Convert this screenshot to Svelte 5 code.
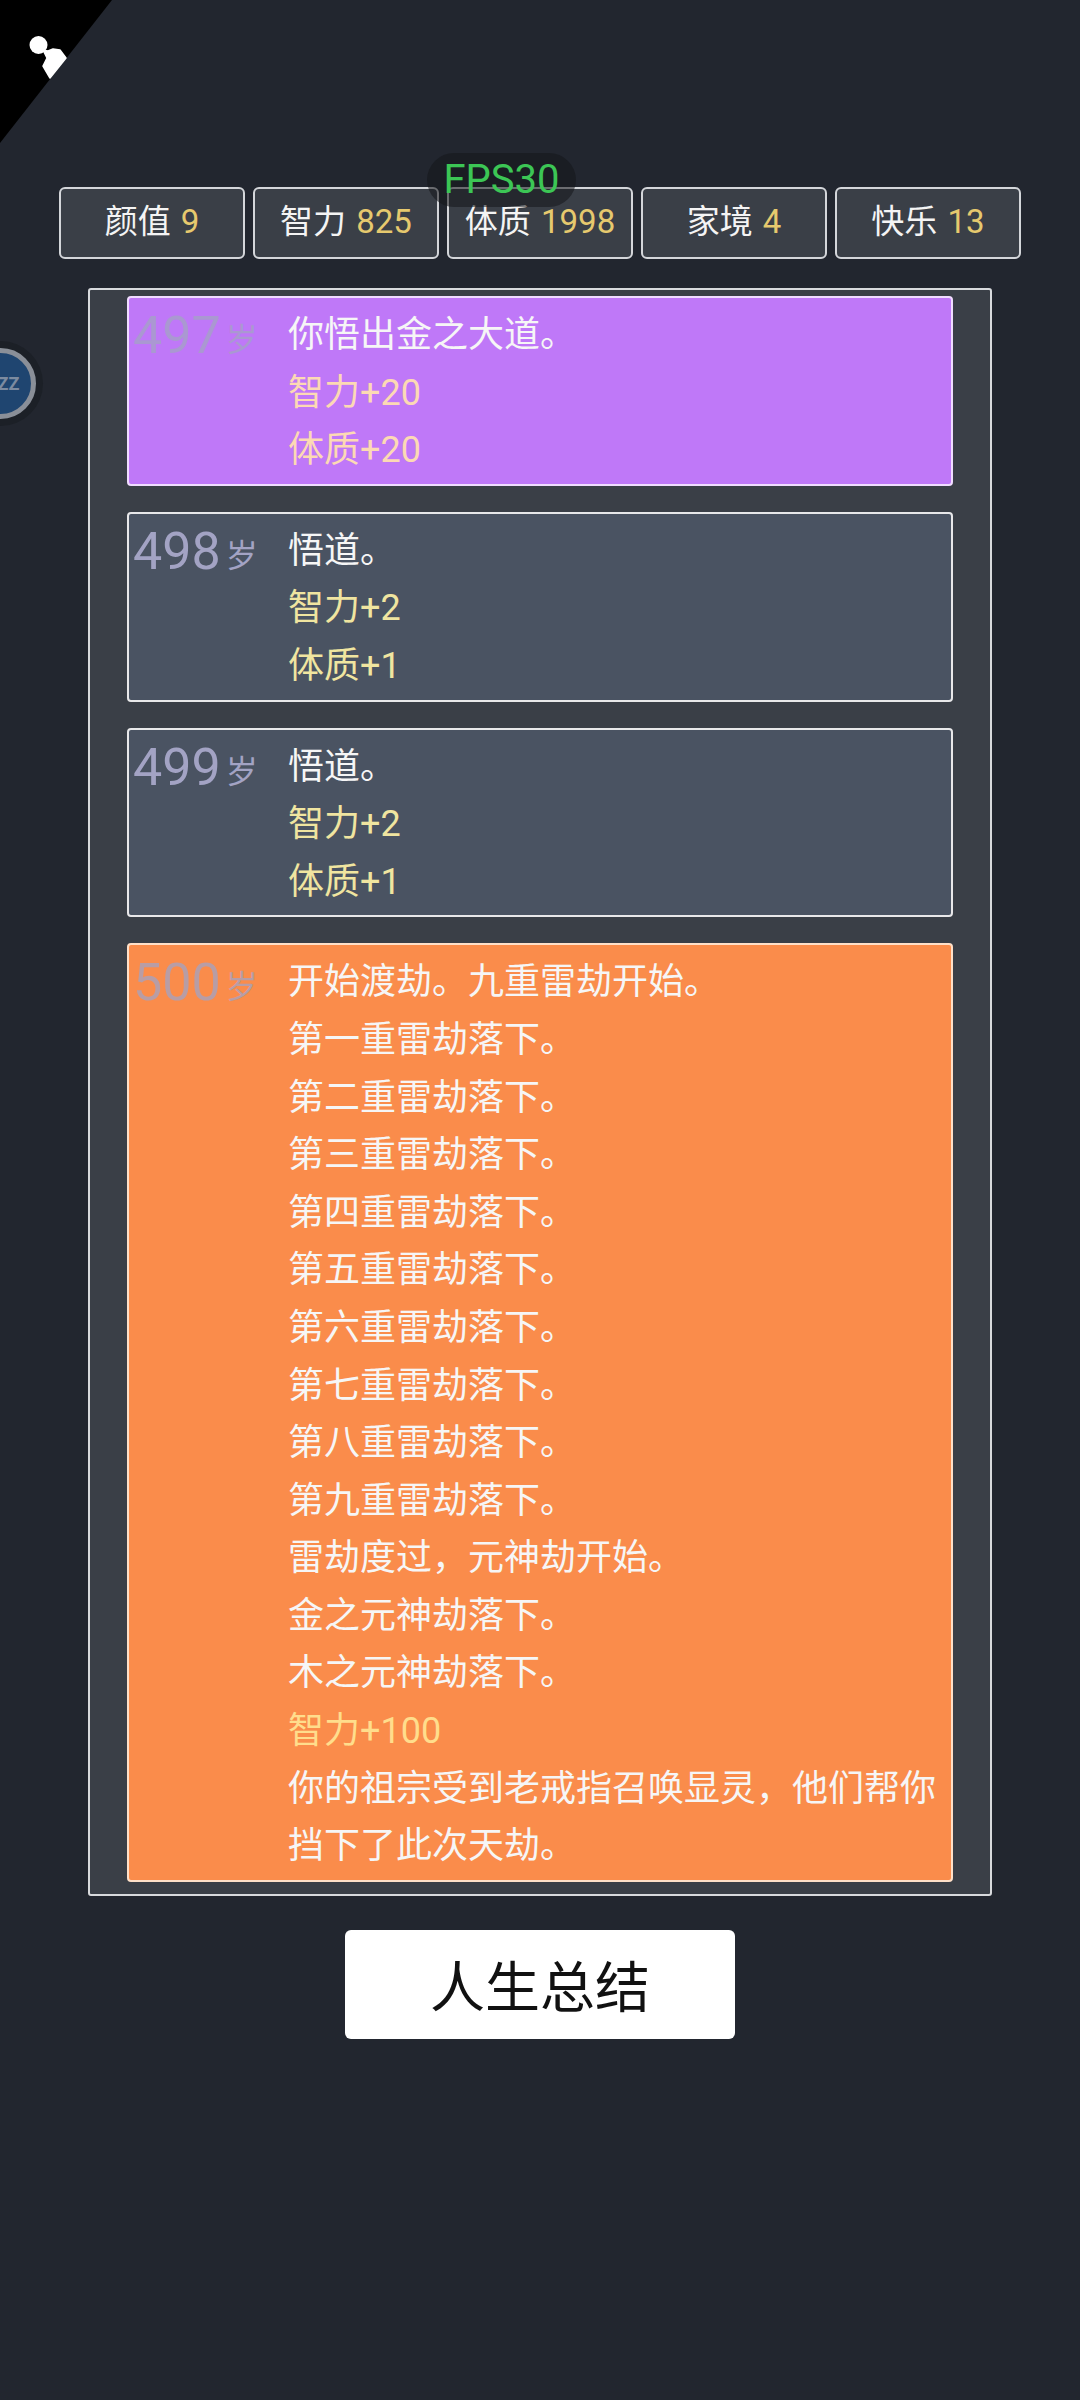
<script>
  const stats = [
    { name: "颜值", value: 9 },
    { name: "智力", value: 825 },
    { name: "体质", value: 1998 },
    { name: "家境", value: 4 },
    { name: "快乐", value: 13 }
  ];

  const years = [
    {
      age: 497,
      grade: "purple",
      lines: [{ text: "你悟出金之大道。" }, { text: "智力+20", up: true }, { text: "体质+20", up: true }]
    },
    {
      age: 498,
      grade: "plain",
      lines: [{ text: "悟道。" }, { text: "智力+2", up: true }, { text: "体质+1", up: true }]
    },
    {
      age: 499,
      grade: "plain",
      lines: [{ text: "悟道。" }, { text: "智力+2", up: true }, { text: "体质+1", up: true }]
    },
    {
      age: 500,
      grade: "orange",
      lines: [
        { text: "开始渡劫。九重雷劫开始。" },
        { text: "第一重雷劫落下。" },
        { text: "第二重雷劫落下。" },
        { text: "第三重雷劫落下。" },
        { text: "第四重雷劫落下。" },
        { text: "第五重雷劫落下。" },
        { text: "第六重雷劫落下。" },
        { text: "第七重雷劫落下。" },
        { text: "第八重雷劫落下。" },
        { text: "第九重雷劫落下。" },
        { text: "雷劫度过，元神劫开始。" },
        { text: "金之元神劫落下。" },
        { text: "木之元神劫落下。" },
        { text: "智力+100", up: true },
        { text: "你的祖宗受到老戒指召唤显灵，他们帮你挡下了此次天劫。" }
      ]
    }
  ];
</script>

<div class="page">
  <div class="corner">
    <svg width="112" height="143" viewBox="0 0 112 143">
      <path d="M0 0H112L0 143Z" fill="#000" />
      <circle cx="38.5" cy="45" r="9" fill="#fff" />
      <path d="M43 50L48 51L53 49L60 50L66 58L50 78L43 66L47 58Z" fill="#fff" stroke="#fff" stroke-width="1.5" stroke-linejoin="round" />
    </svg>
  </div>

  <div class="fps">FPS30</div>

  <div class="sleep"><span>ZZ</span></div>

  <div class="stats">
    {#each stats as stat}
      <div class="stat">{stat.name} <span class="value">{stat.value}</span></div>
    {/each}
  </div>

  <div class="panel">
    {#each years as year}
      <div class="year {year.grade}">
        <div class="age"><span class="num">{year.age}</span> <span class="unit">岁</span></div>
        <div class="lines">
          {#each year.lines as line}
            <div class:up={line.up}>{line.text}</div>
          {/each}
        </div>
      </div>
    {/each}
  </div>

  <button class="summary">人生总结</button>
</div>

<style>
  :global(body) {
    background-color: #22262f;
  }

  .page {
    position: relative;
    height: 2400px;
    overflow: hidden;
    box-sizing: border-box;
    padding-top: 187px;
    background-color: #22262f;
    font-family: Roboto, "Noto Sans CJK SC", sans-serif;
    color: #f4f4f4;
  }

  .corner {
    position: absolute;
    left: 0;
    top: 0;
    line-height: 0;
  }

  .fps {
    position: absolute;
    left: 427px;
    top: 153px;
    width: 149px;
    height: 54px;
    border-radius: 27px;
    background-color: rgba(20, 22, 26, 0.55);
    color: #3cc655;
    font-size: 40px;
    line-height: 54px;
    text-align: center;
    z-index: 2;
  }

  .sleep {
    position: absolute;
    left: -35px;
    top: 348px;
    width: 71px;
    height: 71px;
    box-sizing: border-box;
    border: 5px solid #8a8f98;
    border-radius: 50%;
    background-color: #1f4570;
    box-shadow: 0 0 0 7px #1c2027;
    display: flex;
    align-items: center;
    justify-content: center;
    color: #7c8ba0;
    font-size: 18px;
    font-weight: 700;
    z-index: 2;
  }

  .sleep span {
    margin-left: 16px;
  }

  .stats {
    display: flex;
    justify-content: center;
    gap: 8px;
  }

  .stat {
    width: 186px;
    height: 72px;
    box-sizing: border-box;
    border: 2px solid #d4d6da;
    border-radius: 6px;
    background-color: #3a3f47;
    font-size: 33px;
    line-height: 66px;
    text-align: center;
    word-spacing: 2px;
  }

  .value {
    color: #e6c96e;
  }

  .panel {
    width: 904px;
    height: 1608px;
    box-sizing: border-box;
    margin: 29px auto 0;
    padding: 6px 37px 0;
    border: 2px solid #d8dadd;
    border-radius: 3px;
    background-color: #3a3f47;
    display: flex;
    flex-direction: column;
    gap: 26px;
  }

  .year {
    display: flex;
    box-sizing: border-box;
    padding: 9px 6px 4px 4px;
    border: 2px solid #e8e8ea;
    border-radius: 4px;
    background-color: #4a5362;
  }

  .purple {
    background-color: #bf78f8;
    border-color: #f0dcff;
  }

  .orange {
    background-color: #fa8c4b;
    border-color: #ffe0c8;
  }

  .age {
    flex: 0 0 155px;
    color: #a3a3c4;
    line-height: 57.6px;
    white-space: nowrap;
  }

  .purple .age,
  .orange .age {
    opacity: 0.75;
  }

  .num {
    font-size: 52px;
  }

  .unit {
    font-size: 32px;
    margin-left: 1px;
    vertical-align: 2px;
  }

  .lines {
    flex: 1;
    font-size: 36px;
    line-height: 57.6px;
    color: #f6f6f6;
  }

  .up {
    color: #f0e5a0;
  }

  .purple .up {
    color: #fcd9b4;
  }

  .orange .up {
    color: #ffdd8c;
  }

  .summary {
    display: block;
    width: 390px;
    height: 109px;
    margin: 34px auto 0;
    padding: 0 0 4px;
    border: none;
    border-radius: 6px;
    background-color: #fff;
    color: #111;
    font-family: Roboto, "Noto Sans CJK SC", sans-serif;
    font-size: 55px;
  }
</style>
